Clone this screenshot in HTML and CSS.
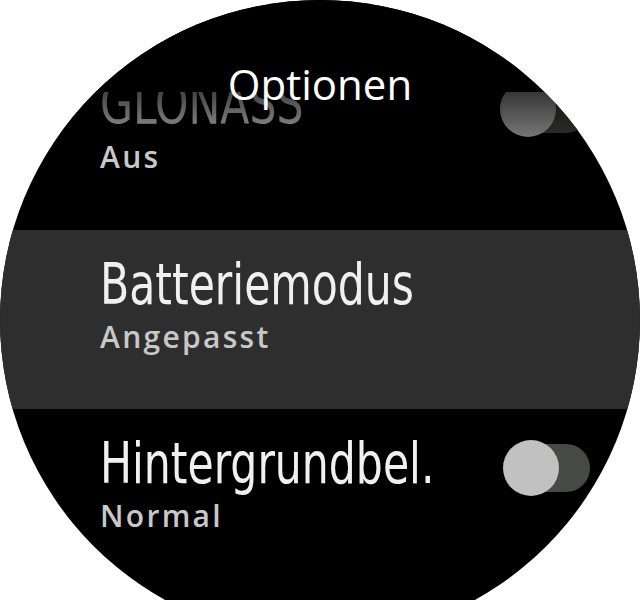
FILE: index.html
```html
<!DOCTYPE html>
<html lang="de">
<head>
<meta charset="utf-8">
<title>Optionen</title>
<link rel="stylesheet" href="styles.css">
</head>
<body>
<div class="screen">
  <div class="watch">
    <div class="list">
      <div class="item">
        <div class="text">
          <div class="label">GLONASS</div>
          <div class="value">Aus</div>
        </div>
        <div class="toggle"><span class="track"></span><span class="knob"></span></div>
      </div>
      <div class="item selected">
        <div class="text">
          <div class="label">Batteriemodus</div>
          <div class="value">Angepasst</div>
        </div>
      </div>
      <div class="item">
        <div class="text">
          <div class="label">Hintergrundbel.</div>
          <div class="value">Normal</div>
        </div>
        <div class="toggle"><span class="track"></span><span class="knob"></span></div>
      </div>
    </div>
    <div class="header">
      <div class="title">Optionen</div>
    </div>
  </div>
</div>
</body>
</html>
```

FILE: styles.css
```css
html, body {
  margin: 0;
  padding: 0;
  background: #ffffff;
  overflow: hidden;
}

.screen {
  width: 640px;
  height: 600px;
  overflow: hidden;
}

.watch {
  position: relative;
  width: 640px;
  height: 640px;
  border-radius: 50%;
  background: #000000;
  overflow: hidden;
}

.list {
  padding-top: 50px;
}

.item {
  height: 180px;
  box-sizing: border-box;
  padding: 0 50px 0 100px;
  display: flex;
  justify-content: space-between;
  align-items: flex-start;
}

.item.selected {
  background: #2e2e2e;
  height: 179px;
}

.text {
  padding-top: 26px;
}

.label {
  font-family: "DejaVu Sans Condensed", "DejaVu Sans", sans-serif;
  font-size: 57px;
  line-height: 57px;
  color: #f0f0f0;
  white-space: nowrap;
  transform: scaleX(0.83);
  transform-origin: left center;
}

.value {
  margin-top: 9px;
  font-family: "Open Sans", "Noto Sans", sans-serif;
  font-weight: 600;
  font-size: 30px;
  line-height: 30px;
  letter-spacing: 2.3px;
  color: #c8c8c8;
}

.toggle {
  position: relative;
  width: 90px;
  height: 56px;
  margin-top: 31px;
}

.track {
  position: absolute;
  left: 6px;
  right: 0;
  top: 4px;
  height: 48px;
  border-radius: 24px;
  background: #464944;
}

.knob {
  position: absolute;
  left: 0;
  top: 0;
  width: 56px;
  height: 56px;
  border-radius: 50%;
  background: #c1c1c1;
}

.header {
  position: absolute;
  top: 0;
  left: 0;
  right: 0;
  height: 142px;
  background: linear-gradient(to bottom, #000 0, #000 92px, rgba(0,0,0,0.72) 92px, rgba(0,0,0,0.38) 138px, rgba(0,0,0,0) 142px);
}

.title {
  padding-top: 62px;
  text-align: center;
  font-family: "Open Sans", "Noto Sans", sans-serif;
  font-size: 42px;
  line-height: 43px;
  color: #ffffff;
}
```
